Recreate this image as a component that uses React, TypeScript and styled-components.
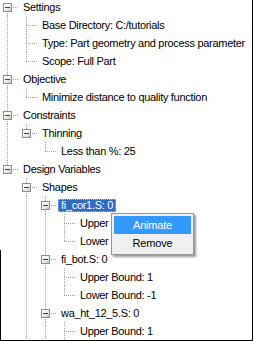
import React from "react";
import styled, { createGlobalStyle } from "styled-components";

const GlobalStyle = createGlobalStyle`
  html, body {
    margin: 0;
    padding: 0;
    background: #fff;
  }
  body {
    font-family: "Liberation Sans", Arial, sans-serif;
    font-size: 11px;
    color: #000;
  }
`;

type TreeNode = {
  label: string;
  selected?: boolean;
  children?: TreeNode[];
};

type FlatRow = {
  node: TreeNode;
  depth: number;
  guides: boolean[];
  first: boolean;
  last: boolean;
};

const VISIBLE_ROWS = 19;

const tree: TreeNode[] = [
  {
    label: "Settings",
    children: [
      { label: "Base Directory: C:/tutorials" },
      { label: "Type: Part geometry and process parameter" },
      { label: "Scope: Full Part" },
    ],
  },
  {
    label: "Objective",
    children: [{ label: "Minimize distance to quality function" }],
  },
  {
    label: "Constraints",
    children: [{ label: "Thinning", children: [{ label: "Less than %: 25" }] }],
  },
  {
    label: "Design Variables",
    children: [
      {
        label: "Shapes",
        children: [
          {
            label: "fi_cor1.S: 0",
            selected: true,
            children: [{ label: "Upper Bound: 1" }, { label: "Lower Bound: -1" }],
          },
          {
            label: "fi_bot.S: 0",
            children: [{ label: "Upper Bound: 1" }, { label: "Lower Bound: -1" }],
          },
          {
            label: "wa_ht_12_5.S: 0",
            children: [{ label: "Upper Bound: 1" }, { label: "Lower Bound: -1" }],
          },
          { label: "wa_ht_12_6.S: 0", children: [{ label: "Upper Bound: 1" }] },
        ],
      },
      { label: "Morphing", children: [{ label: "None" }] },
    ],
  },
];

function flatten(nodes: TreeNode[], depth = 0, guides: boolean[] = []): FlatRow[] {
  return nodes.flatMap((node, i) => {
    const last = i === nodes.length - 1;
    const row: FlatRow = { node, depth, guides, first: depth === 0 && i === 0, last };
    const kids = node.children ? flatten(node.children, depth + 1, [...guides, !last]) : [];
    return [row, ...kids];
  });
}

const DOT = "#a0a0a0";
const vDots = `repeating-linear-gradient(to bottom, ${DOT} 0 1px, transparent 1px 2px)`;
const hDots = `repeating-linear-gradient(to right, ${DOT} 0 1px, transparent 1px 2px)`;

const Frame = styled.div`
  position: relative;
  width: 253px;
  height: 341px;
  box-sizing: border-box;
  overflow: hidden;
  background: linear-gradient(#000, #000) 0 250px / 1px 100% no-repeat, #fff;
  border-right: 1px solid #000;
  border-bottom: 1px solid #000;
`;

const TreeList = styled.div`
  margin: -2px 0 0 -2px;
  display: flex;
  flex-direction: column;
`;

const Row = styled.div`
  display: flex;
  align-items: stretch;
  height: 18px;
  white-space: nowrap;
`;

const Guide = styled.div<{ $line: boolean }>`
  flex: 0 0 19px;
  height: 18px;
  background: ${(p) => (p.$line ? `${vDots} 9px 0 / 1px 100% no-repeat` : "none")};
`;

const Connector = styled.div<{ $up: boolean; $down: boolean }>`
  flex: 0 0 22px;
  height: 18px;
  display: flex;
  align-items: center;
  padding-left: 5px;
  box-sizing: border-box;
  background:
    ${(p) => (p.$up ? `${vDots} 9px 0 / 1px 9px no-repeat,` : "")}
    ${(p) => (p.$down ? `${vDots} 9px 9px / 1px 9px no-repeat,` : "")}
    ${hDots} 9px 9px / 12px 1px no-repeat;
`;

const Expander = styled.div`
  width: 9px;
  height: 9px;
  box-sizing: border-box;
  border: 1px solid #8e8f8f;
  background: linear-gradient(135deg, #ffffff 0%, #f4f4f0 45%, #c8c8bc 100%);
  display: flex;
  align-items: center;
  justify-content: center;
  margin-top: 1px;
`;

const Minus = styled.span`
  width: 5px;
  height: 1px;
  background: #213e9a;
`;

const Label = styled.span<{ $selected?: boolean }>`
  align-self: center;
  height: 13px;
  box-sizing: border-box;
  margin-top: 1px;
  padding: 0 2px;
  line-height: 11px;
  letter-spacing: -0.3px;
  border: 1px ${(p) => (p.$selected ? "dotted #f2b64a" : "solid transparent")};
  background: ${(p) => (p.$selected ? "#316ac5" : "transparent")};
  color: ${(p) => (p.$selected ? "#fff" : "#000")};
`;

const Menu = styled.div`
  position: absolute;
  left: 111px;
  top: 213px;
  width: 83px;
  box-sizing: border-box;
  padding: 2px;
  background: #f0f0f0;
  border: 1px solid #979797;
  box-shadow: 2px 2px 2px rgba(0, 0, 0, 0.4);
  display: flex;
  flex-direction: column;
`;

const MenuItem = styled.div<{ $active?: boolean }>`
  height: 18px;
  line-height: 18px;
  text-align: center;
  letter-spacing: -0.2px;
  background: ${(p) => (p.$active ? "#3399ff" : "transparent")};
  color: ${(p) => (p.$active ? "#fff" : "#000")};
`;

export default function App() {
  const rows = flatten(tree).slice(0, VISIBLE_ROWS);
  return (
    <>
      <GlobalStyle />
      <Frame>
        <TreeList>
          {rows.map((r, i) => (
            <Row key={i}>
              {r.guides.map((g, k) => (
                <Guide key={k} $line={g} />
              ))}
              <Connector $up={!r.first} $down={!r.last}>
                {r.node.children && (
                  <Expander>
                    <Minus />
                  </Expander>
                )}
              </Connector>
              <Label $selected={r.node.selected}>{r.node.label}</Label>
            </Row>
          ))}
        </TreeList>
        <Menu>
          <MenuItem $active>Animate</MenuItem>
          <MenuItem>Remove</MenuItem>
        </Menu>
      </Frame>
    </>
  );
}
